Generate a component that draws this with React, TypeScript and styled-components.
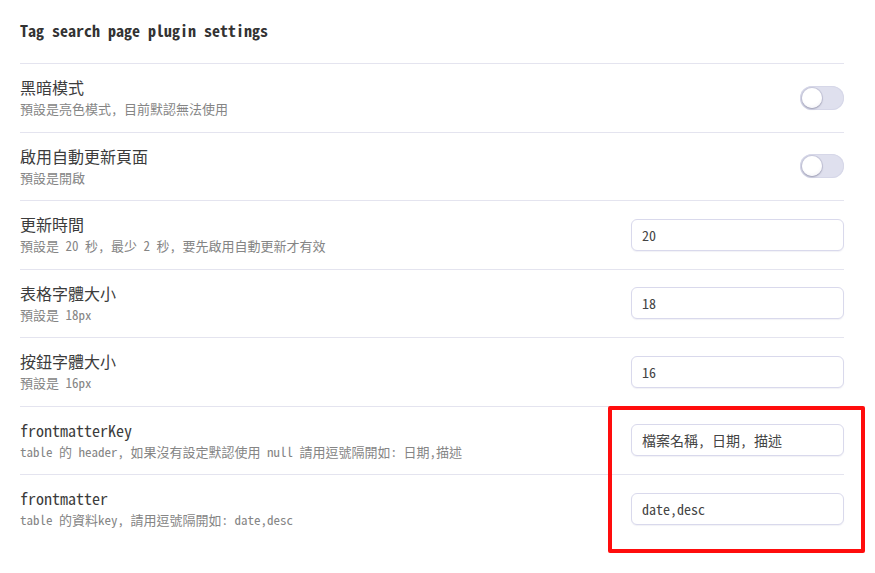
import React from "react";
import styled, { createGlobalStyle } from "styled-components";

const GlobalStyle = createGlobalStyle`
  html, body { margin: 0; padding: 0; background: #ffffff; }
  body {
    font-family: "Noto Sans Mono CJK TC", "Noto Sans Mono CJK SC", "DejaVu Sans Mono", "Noto Sans CJK TC", monospace;
    color: #222;
  }
`;

const Page = styled.div`
  position: relative;
  box-sizing: border-box;
  width: 875px;
  min-height: 573px;
  padding: 0 31px 0 20px;
`;

const Title = styled.h2`
  margin: 0;
  padding: 19px 0 22px;
  font-size: 16px;
  line-height: 22px;
  font-weight: 700;
  color: #333333;
`;

const Row = styled.div`
  box-sizing: border-box;
  display: flex;
  align-items: center;
  justify-content: space-between;
  border-top: 1px solid #e4e4ef;
  padding: 0;
  height: 68.5px;
`;

const Info = styled.div`
  display: flex;
  flex-direction: column;
`;

const Label = styled.div`
  font-size: 16px;
  line-height: 22px;
  color: #3c3c3c;
`;

const Desc = styled.div`
  margin-top: 1px;
  font-size: 13px;
  line-height: 20px;
  color: #858585;
`;

const Track = styled.div<{ $on?: boolean }>`
  position: relative;
  width: 44px;
  height: 24px;
  border-radius: 12px;
  background: ${(p) => (p.$on ? "#7c6cf0" : "#dfe0ee")};
  box-shadow: inset 0 0 0 1px #d6d7e8;
  flex-shrink: 0;
`;

const Knob = styled.div`
  position: absolute;
  top: 2px;
  left: 2px;
  width: 20px;
  height: 20px;
  border-radius: 50%;
  background: radial-gradient(circle at 45% 35%, #ffffff 55%, #ececf2 100%);
  box-shadow: 0 1px 2px rgba(60, 60, 90, 0.35), 0 0 0 1px rgba(170, 170, 195, 0.35);
`;

const TextInput = styled.input`
  box-sizing: border-box;
  width: 213px;
  height: 32px;
  padding: 0 10px;
  border: 1px solid #d9d9ec;
  border-radius: 6px;
  background: #fff;
  font-family: inherit;
  font-size: 14px;
  color: #444444;
  outline: none;
  box-shadow: 0 1px 1px rgba(200, 200, 220, 0.25);
`;

const Highlight = styled.div`
  position: absolute;
  left: 608px;
  top: 406px;
  width: 249px;
  height: 139px;
  border: 4px solid #ff0d0d;
  border-radius: 2px;
  pointer-events: none;
`;

type Setting =
  | { label: string; desc: string; kind: "toggle" }
  | { label: string; desc: string; kind: "text"; value: string };

const settings: Setting[] = [
  { label: "黑暗模式", desc: "預設是亮色模式, 目前默認無法使用", kind: "toggle" },
  { label: "啟用自動更新頁面", desc: "預設是開啟", kind: "toggle" },
  { label: "更新時間", desc: "預設是 20 秒, 最少 2 秒, 要先啟用自動更新才有效", kind: "text", value: "20" },
  { label: "表格字體大小", desc: "預設是 18px", kind: "text", value: "18" },
  { label: "按鈕字體大小", desc: "預設是 16px", kind: "text", value: "16" },
  {
    label: "frontmatterKey",
    desc: "table 的 header, 如果沒有設定默認使用 null 請用逗號隔開如: 日期,描述",
    kind: "text",
    value: "檔案名稱, 日期, 描述",
  },
  { label: "frontmatter", desc: "table 的資料key, 請用逗號隔開如: date,desc", kind: "text", value: "date,desc" },
];

export default function App() {
  return (
    <>
      <GlobalStyle />
      <Page>
        <Title>Tag search page plugin settings</Title>
        {settings.map((s) => (
          <Row key={s.label}>
            <Info>
              <Label>{s.label}</Label>
              <Desc>{s.desc}</Desc>
            </Info>
            {s.kind === "toggle" ? (
              <Track>
                <Knob />
              </Track>
            ) : (
              <TextInput defaultValue={s.value} />
            )}
          </Row>
        ))}
        <Highlight />
      </Page>
    </>
  );
}
